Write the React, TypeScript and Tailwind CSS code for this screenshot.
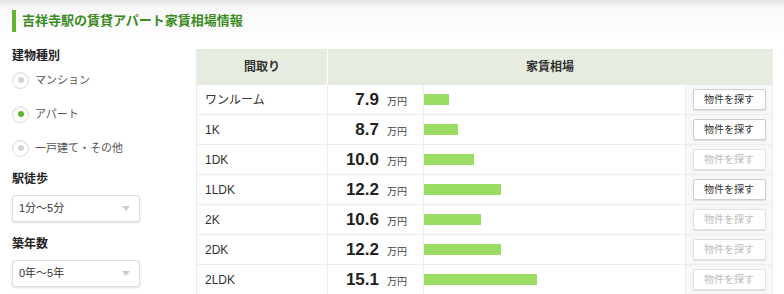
import React from 'react';

const rows = [
  { plan: 'ワンルーム', rent: '7.9', bar: 25, active: true },
  { plan: '1K', rent: '8.7', bar: 34, active: true },
  { plan: '1DK', rent: '10.0', bar: 50, active: false },
  { plan: '1LDK', rent: '12.2', bar: 77, active: true },
  { plan: '2K', rent: '10.6', bar: 57, active: false },
  { plan: '2DK', rent: '12.2', bar: 77, active: false },
  { plan: '2LDK', rent: '15.1', bar: 113, active: false },
];

const buildingTypes = [
  { label: 'マンション', checked: false },
  { label: 'アパート', checked: true },
  { label: '一戸建て・その他', checked: false },
];

function Radio({ label, checked }: { label: string; checked: boolean }) {
  return (
    <div className="flex items-center h-[34px] gap-[6px]">
      <span className="w-[17px] h-[17px] rounded-full border border-[#dcdcdc] bg-white shadow-[inset_0_1px_2px_rgba(0,0,0,0.08)] flex items-center justify-center">
        <span className={`w-[6px] h-[6px] rounded-full ${checked ? 'bg-[#5cb82a]' : 'bg-[#d4d4d4]'}`} />
      </span>
      <span className="text-[11px] text-[#555]">{label}</span>
    </div>
  );
}

function Select({ value }: { value: string }) {
  return (
    <div className="w-[128px] h-[27px] border border-[#dedede] rounded-[3px] bg-white shadow-[0_1px_2px_rgba(0,0,0,0.12)] flex items-center justify-between pl-[6px] pr-[9px]">
      <span className="text-[11px] text-[#333]">{value}</span>
      <span className="w-0 h-0 border-l-[4px] border-r-[4px] border-t-[5px] border-l-transparent border-r-transparent border-t-[#cccccc]" />
    </div>
  );
}

export default function App() {
  return (
    <div className="w-[784px] h-[294px] overflow-hidden bg-white font-['Liberation_Sans','Noto_Sans_CJK_JP',sans-serif] text-[#333]">
      {/* Title band */}
      <div className="h-[40px] pt-[10px] px-3 bg-gradient-to-b from-[#e4e4e4] via-[#f8f8f8] via-[20%] to-white">
        <div className="h-[22px] border-l-4 border-[#62b531] pl-[6px] flex items-center">
          <h1 className="text-[13px] font-bold text-[#3b8c1f]">吉祥寺駅の賃貸アパート家賃相場情報</h1>
        </div>
      </div>

      <div className="flex px-3 mt-[9px]">
        {/* Sidebar filters */}
        <aside className="w-[184px] shrink-0">
          <h3 className="text-[12px] leading-[14px] h-[14px] font-bold text-[#222]">建物種別</h3>
          {buildingTypes.map((t) => (
            <Radio key={t.label} label={t.label} checked={t.checked} />
          ))}
          <h3 className="mt-[7px] text-[12px] leading-[14px] h-[14px] font-bold text-[#222]">駅徒歩</h3>
          <div className="mt-[9px]">
            <Select value="1分〜5分" />
          </div>
          <h3 className="mt-[15px] text-[12px] leading-[14px] h-[14px] font-bold text-[#222]">築年数</h3>
          <div className="mt-[9px]">
            <Select value="0年〜5年" />
          </div>
        </aside>

        {/* Rent table */}
        <div className="w-[577px] border-l border-r border-[#ebebeb]">
          <div className="grid grid-cols-[130px_1fr] h-[36px] bg-[#e6ecdf] text-[12px] font-bold text-[#333]">
            <div className="flex items-center justify-center">間取り</div>
            <div className="flex items-center justify-center border-l border-white">家賃相場</div>
          </div>
          {rows.map((r) => (
            <div key={r.plan} className="grid grid-cols-[130px_96px_262px_87px] h-[30px] border-b border-[#ececec]">
              <div className="flex items-center pl-[8px] text-[12px] text-[#333]">{r.plan}</div>
              <div className="flex items-center justify-end pr-[16px] gap-[8px] border-l border-[#ececec]">
                <span className="text-[17px] font-bold text-[#222] leading-none">{r.rent}</span>
                <span className="text-[10px] text-[#444] mt-[3px]">万円</span>
              </div>
              <div className="flex items-center border-l border-[#ececec]">
                <span className="h-[11px] bg-[#9bdd63]" style={{ width: r.bar }} />
              </div>
              <div className="flex items-center justify-center bg-[#f7f7f7] border-l border-[#ededed]">
                <button
                  className={`w-[73px] h-[21px] rounded-[2px] bg-white border text-[10px] shadow-[0_1px_1px_rgba(0,0,0,0.1)] ${
                    r.active ? 'border-[#cdcdcd] text-[#333]' : 'border-[#e0e0e0] text-[#bdbdbd]'
                  }`}
                >
                  物件を探す
                </button>
              </div>
            </div>
          ))}
        </div>
      </div>
    </div>
  );
}
